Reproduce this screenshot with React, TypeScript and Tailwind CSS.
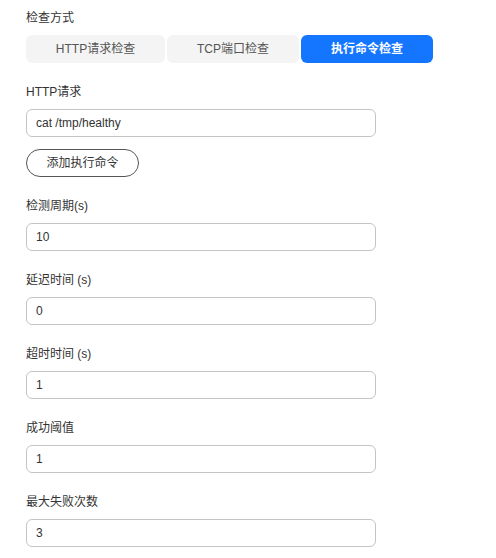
import { useState } from 'react';

type Mode = 'http' | 'tcp' | 'exec';

const MODES: { key: Mode; label: string; width: string }[] = [
  { key: 'http', label: 'HTTP请求检查', width: 'w-[139px]' },
  { key: 'tcp', label: 'TCP端口检查', width: 'w-[132px]' },
  { key: 'exec', label: '执行命令检查', width: 'w-[132px]' },
];

function Label({ children }: { children: React.ReactNode }) {
  return <div className="mb-[7px] h-5 text-[12px] leading-5 text-[#333]">{children}</div>;
}

function TextInput({ value }: { value: string }) {
  return (
    <input
      readOnly
      value={value}
      className="box-border h-[28px] w-[350px] rounded-[6px] border border-[#c4c4c4] bg-white pl-[9px] text-[12px] text-[#333] outline-none"
    />
  );
}

function Field({ label, value }: { label: string; value: string }) {
  return (
    <div className="mb-[19px]">
      <Label>{label}</Label>
      <TextInput value={value} />
    </div>
  );
}

export default function App() {
  const [mode, setMode] = useState<Mode>('exec');

  return (
    <div
      className="min-h-[558px] w-[496px] bg-white px-[26px] pt-2"
      style={{ fontFamily: '"Liberation Sans", "Noto Sans CJK SC", sans-serif' }}
    >
      <div className="mb-[19px]">
        <Label>检查方式</Label>
        <div className="flex gap-[2px]">
          {MODES.map((m) => (
            <button
              key={m.key}
              onClick={() => setMode(m.key)}
              className={
                m.key === mode
                  ? `${m.width} h-[28px] rounded-[6px] bg-[#1476ff] text-[12px] font-bold text-white`
                  : `${m.width} h-[28px] rounded-[6px] bg-[#f4f4f4] text-[12px] text-[#555]`
              }
            >
              {m.label}
            </button>
          ))}
        </div>
      </div>

      <div className="mb-[19px]">
        <Label>HTTP请求</Label>
        <TextInput value="cat /tmp/healthy" />
        <button className="mt-3 box-border block h-[28px] w-[113px] rounded-full border border-[#555] bg-white text-[12px] text-[#333]">
          添加执行命令
        </button>
      </div>

      <Field label="检测周期(s)" value="10" />
      <Field label="延迟时间 (s)" value="0" />
      <Field label="超时时间 (s)" value="1" />
      <Field label="成功阈值" value="1" />
      <Field label="最大失败次数" value="3" />
    </div>
  );
}
